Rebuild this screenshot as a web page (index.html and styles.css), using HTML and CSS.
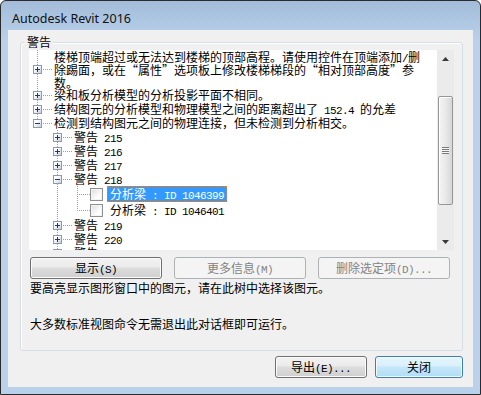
FILE: index.html
```html
<!DOCTYPE html>
<html lang="zh-CN">
<head>
    <meta charset="UTF-8">
    <meta name="viewport" content="width=device-width, initial-scale=1.0">
    <title>Autodesk Revit 2016</title>
    <link rel="stylesheet" href="styles.css">
</head>
<body>

<div class="window">
    <div class="titlebar">Autodesk Revit 2016</div>

    <div class="client">
        <div class="group">
            <span class="group-title">警告</span>

            <div class="tree-box">
                <div class="tree">
                    <ul class="branch">
                        <li>
                            <div class="row tall">
                                <span class="exp plus"></span>
                                <span class="label">楼梯顶端超过或无法达到楼梯的顶部高程。请使用控件在顶端添加<span class="en">/</span>删<br>除踢面，或在<span class="q open">“</span>属性<span class="q close">”</span>选项板上修改楼梯梯段的<span class="q open">“</span>相对顶部高度<span class="q close">”</span>参<br>数。</span>
                            </div>
                        </li>
                        <li>
                            <div class="row"><span class="exp plus"></span><span class="label">梁和板分析模型的分析投影平面不相同。</span></div>
                        </li>
                        <li>
                            <div class="row"><span class="exp plus"></span><span class="label">结构图元的分析模型和物理模型之间的距离超出了<span class="en"> 152.4 </span>的允差</span></div>
                        </li>
                        <li>
                            <div class="row"><span class="exp minus"></span><span class="label">检测到结构图元之间的物理连接，但未检测到分析相交。</span></div>
                            <ul class="branch sub">
                                <li><div class="row"><span class="exp plus"></span><span class="label">警告<span class="en"> 215</span></span></div></li>
                                <li><div class="row"><span class="exp plus"></span><span class="label">警告<span class="en"> 216</span></span></div></li>
                                <li><div class="row"><span class="exp plus"></span><span class="label">警告<span class="en"> 217</span></span></div></li>
                                <li>
                                    <div class="row"><span class="exp minus"></span><span class="label">警告<span class="en"> 218</span></span></div>
                                    <ul class="branch sub leaves">
                                        <li>
                                            <div class="row check"><span class="box"></span><span class="label selected">分析梁<span class="en"> : ID 1046399</span></span></div>
                                        </li>
                                        <li>
                                            <div class="row check"><span class="box"></span><span class="label">分析梁<span class="en"> : ID 1046401</span></span></div>
                                        </li>
                                    </ul>
                                </li>
                                <li><div class="row"><span class="exp plus"></span><span class="label">警告<span class="en"> 219</span></span></div></li>
                                <li><div class="row"><span class="exp plus"></span><span class="label">警告<span class="en"> 220</span></span></div></li>
                                <li><div class="row"><span class="exp plus"></span><span class="label">警告<span class="en"> 221</span></span></div></li>
                                <li><div class="row"><span class="exp plus"></span><span class="label">警告<span class="en"> 222</span></span></div></li>
                            </ul>
                        </li>
                    </ul>
                </div>

                <div class="scrollbar">
                    <div class="sb-btn">
                        <svg width="7" height="4" viewBox="0 0 7 4"><polygon points="0,4 3.5,0 7,4" fill="#3a3a3a"/></svg>
                    </div>
                    <div class="thumb"><span class="grip"></span></div>
                    <div class="sb-space"></div>
                    <div class="sb-btn">
                        <svg width="7" height="4" viewBox="0 0 7 4"><polygon points="0,0 7,0 3.5,4" fill="#3a3a3a"/></svg>
                    </div>
                </div>
            </div>

            <div class="actions">
                <button class="btn">显示<span class="en">(S)</span></button>
                <button class="btn" disabled>更多信息<span class="en">(M)</span></button>
                <button class="btn" disabled>删除选定项<span class="en">(D)...</span></button>
            </div>

            <p class="hint">要高亮显示图形窗口中的图元，请在此树中选择该图元。</p>
            <p class="hint second">大多数标准视图命令无需退出此对话框即可运行。</p>
        </div>

        <div class="footer">
            <button class="btn export">导出<span class="en">(E)...</span></button>
            <button class="btn default">关闭</button>
        </div>
    </div>
</div>

</body>
</html>
```

FILE: styles.css
```css
* {
    box-sizing: border-box;
}

body {
    margin: 0;
    font-family: "Noto Sans CJK SC", sans-serif;
    font-size: 12px;
    color: #000;
    background: #fff;
}

/* half-width latin, like the dialog's bitmap font */
.en {
    font-family: "Liberation Mono", monospace;
    font-size: 11px;
    letter-spacing: -0.6px;
    line-height: 0;
}

/* full-width curly quotes */
.q {
    display: inline-block;
    width: 12px;
    line-height: 0;
}

.q.open {
    text-align: right;
}

.q.close {
    text-align: left;
}

/* window frame */
.window {
    width: 481px;
    height: 395px;
    border: 1px solid #2a2a2a;
    border-radius: 6px 6px 0 0;
    background: linear-gradient(to bottom, #a3bcd9, #b9d1ea 40px, #b9d1ea);
    padding: 0 7px 7px;
    display: flex;
    flex-direction: column;
}

.titlebar {
    height: 29px;
    padding: 5px 0 0 4px;
    display: flex;
    align-items: center;
    font-family: "Noto Sans", sans-serif;
    font-size: 12.5px;
    color: #111;
}

.client {
    flex: 1;
    background: #f0f0f0;
    padding: 12px 10px 9px 12px;
    display: flex;
    flex-direction: column;
}

/* group box */
.group {
    position: relative;
    border: 1px solid #d5dfe5;
    border-radius: 3px;
    box-shadow: inset 1px 1px 0 #fff;
    padding: 7px 8px 19px;
}

.group-title {
    position: absolute;
    left: 4px;
    top: -8px;
    padding: 0 2px;
    line-height: 14px;
    background: #f0f0f0;
}

/* tree view */
.tree-box {
    display: flex;
    height: 200px;
}

.tree {
    flex: 1;
    background: #fff;
    overflow: hidden;
}

.branch {
    list-style: none;
    margin: 0;
    padding: 0;
}

.branch.sub {
    padding-left: 20px;
}

.branch li {
    position: relative;
}

.branch li::before {
    content: "";
    position: absolute;
    left: 8px;
    top: 0;
    bottom: 0;
    width: 1px;
    background: repeating-linear-gradient(to bottom, #a0a0a0 0 1px, transparent 1px 2px);
}

.branch li:last-child::before {
    bottom: auto;
    height: 8px;
}

.leaves li:last-child::before {
    height: 9px;
}

.row {
    display: flex;
    align-items: flex-start;
    height: 14px;
    line-height: 14px;
    white-space: nowrap;
    background: repeating-linear-gradient(to right, #a0a0a0 0 1px, transparent 1px 2px) 8px 7px / 15px 1px no-repeat;
}

.row.tall {
    height: 38px;
    line-height: 13px;
    background-position: 8px 19px;
}

.row.check {
    height: 16px;
    line-height: 16px;
    background-position: 8px 8px;
    background-size: 13px 1px;
}

.exp {
    position: relative;
    flex: none;
    width: 9px;
    height: 9px;
    margin: 3px 12px 0 4px;
    border: 1px solid #8d9aab;
    background: linear-gradient(135deg, #ffffff 30%, #c8d0da);
}

.tall .exp {
    margin-top: 15px;
}

.exp.plus {
    background:
        linear-gradient(#1d3a6b, #1d3a6b) center / 5px 1px no-repeat,
        linear-gradient(#1d3a6b, #1d3a6b) center / 1px 5px no-repeat,
        linear-gradient(135deg, #ffffff 30%, #c8d0da);
}

.exp.minus {
    background:
        linear-gradient(#1d3a6b, #1d3a6b) center / 5px 1px no-repeat,
        linear-gradient(135deg, #ffffff 30%, #c8d0da);
}

.box {
    position: relative;
    flex: none;
    width: 13px;
    height: 13px;
    margin: 2px 4px 0 21px;
    border: 1px solid #8e8f8f;
    background: linear-gradient(135deg, #dcdcdc, #ffffff 70%);
    box-shadow: inset 0 0 0 1px #f4f4f4;
}

.check .label {
    padding: 0 3px;
    height: 16px;
}

.label.selected {
    background: #3399ff;
    color: #fff;
    outline: 1px dotted #d4863a;
    outline-offset: -1px;
}

/* scrollbar */
.scrollbar {
    width: 17px;
    display: flex;
    flex-direction: column;
    background: #ebebeb;
}

.sb-btn {
    height: 17px;
    display: flex;
    align-items: center;
    justify-content: center;
}

.thumb {
    margin: 29px 1px 0;
    height: 109px;
    border: 1px solid #979797;
    border-radius: 2px;
    background: linear-gradient(90deg, #f4f4f4, #e9e9e9 50%, #d6d6d6);
    box-shadow: inset 1px 1px 0 #fcfcfc;
    display: flex;
    align-items: center;
    justify-content: center;
}

.grip {
    width: 7px;
    height: 7px;
    background: repeating-linear-gradient(to bottom, #7a7a7a 0 1px, #f6f6f6 1px 2px);
}

.sb-space {
    flex: 1;
}

/* buttons */
.actions {
    display: flex;
    gap: 12px;
    margin: 7px 0 0 1px;
}

.btn {
    height: 22px;
    width: 132px;
    padding: 0;
    font: inherit;
    line-height: 14px;
    color: #000;
    border: 1px solid #707070;
    border-radius: 3px;
    background: linear-gradient(#f2f2f2, #ebebeb 45%, #dddddd 50%, #cfcfcf);
    box-shadow: inset 0 0 0 1px #fbfbfb;
}

.btn:disabled {
    border-color: #adb2b5;
    background: #f4f4f4;
    color: #838383;
    box-shadow: none;
}

.btn.export {
    width: 92px;
}

.btn.default {
    width: 88px;
    border-color: #3c7fb1;
    background: linear-gradient(#e6f5fd, #d9f0fc 45%, #c5e7f9 50%, #b2dcf4);
    box-shadow: inset 0 0 0 1px #f2faff;
}

.hint {
    margin: 2px 0 0 1px;
    line-height: 14px;
}

.hint.second {
    margin-top: 22px;
}

.footer {
    display: flex;
    justify-content: flex-end;
    gap: 8px;
    margin-top: 5px;
}
```
